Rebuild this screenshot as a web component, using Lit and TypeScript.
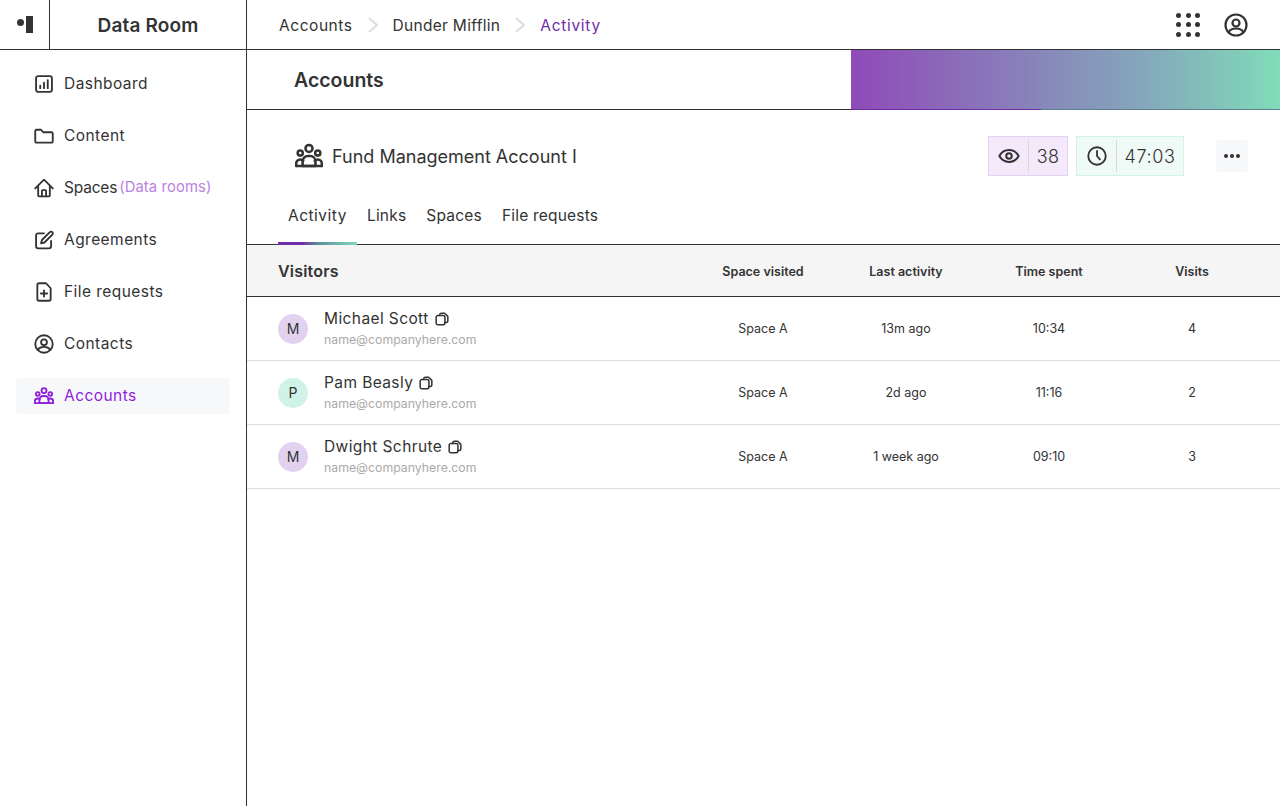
import { LitElement, html, css, svg } from 'lit';
import { customElement } from 'lit/decorators.js';
import { classMap } from 'lit/directives/class-map.js';

const icon = (body: unknown, size = 24, weight = 2.2) => html`<svg width=${size} height=${size} viewBox="0 0 24 24" fill="none" stroke="currentColor" stroke-width=${weight} stroke-linecap="round" stroke-linejoin="round">${body}</svg>`;

const chart = svg`<rect x="2.500" y="2.500" width="19" height="19" rx="2.500"/><path d="M7.500 17v-3M12 17V10.500M16.500 17V7.500"/>`;
const folder = svg`<path d="M1.500 6a1.500 1.500 0 0 1 1.500-1.500h5.500l2.500 3h10A1.500 1.500 0 0 1 22.500 9v9.500a1.500 1.500 0 0 1-1.500 1.500H3a1.500 1.500 0 0 1-1.500-1.500z"/>`;
const home = svg`<path d="M1.500 12.500 12 2 22.500 12.500M5 9.500V21a1 1 0 0 0 1 1h12a1 1 0 0 0 1-1V9.500"/><path d="M9.500 22v-6.500a1 1 0 0 1 1-1h3a1 1 0 0 1 1 1V22"/>`;
const edit = svg`<path d="M12 4H5a2.500 2.500 0 0 0-2.500 2.500v13A2.500 2.500 0 0 0 5 22h13a2.500 2.500 0 0 0 2.500-2.500V13"/><path d="M19 2.500a2.100 2.100 0 0 1 3 3L12.500 15 8.500 16l1-4z"/>`;
const filePlus = svg`<path d="M14.500 1.500H6a2 2 0 0 0-2 2v17a2 2 0 0 0 2 2h12a2 2 0 0 0 2-2V7.500z"/><path d="M12 10v7.500M8.250 13.750h7.500"/>`;
const user = svg`<circle cx="12" cy="12" r="10.500"/><circle cx="12" cy="10" r="3.500"/><path d="M4.500 19c1.500-2.200 4-3.500 7.500-3.500s6 1.300 7.500 3.500"/>`;
const group = svg`<circle cx="12" cy="5.500" r="3"/><circle cx="4.500" cy="9.500" r="2.200"/><circle cx="19.500" cy="9.500" r="2.200"/><path d="M1 20.500v-2a3.500 3.500 0 0 1 3.500-3.500c1 0 1.800.3 2.500 1M23 20.500v-2a3.500 3.500 0 0 0-3.500-3.500c-1 0-1.800.3-2.500 1"/><path d="M6.500 20.500v-4a4.500 4.500 0 0 1 4.500-4.500h2a4.500 4.500 0 0 1 4.500 4.500v4z"/><path d="M1 20.500h22"/>`;
const eye = svg`<path d="M1.500 12C4 7.500 7.500 5.500 12 5.500s8 2 10.500 6.500c-2.500 4.500-6 6.500-10.500 6.500S4 16.500 1.500 12z"/><circle cx="12" cy="12" r="3"/>`;
const clock = svg`<circle cx="12" cy="12" r="10.500"/><path d="M12 6v6l3.500 4"/>`;
const copy = svg`<path d="M8 6V5a3 3 0 0 1 3-3h5.500L22 7.500V15a3 3 0 0 1-3 3h-2"/><rect x="2" y="6" width="15" height="16" rx="3"/>`;

const nav = [
  { label: 'Dashboard', icon: chart },
  { label: 'Content', icon: folder },
  { label: 'Spaces', note: '(Data rooms)', icon: home },
  { label: 'Agreements', icon: edit },
  { label: 'File requests', icon: filePlus },
  { label: 'Contacts', icon: user },
  { label: 'Accounts', icon: group, active: true },
];

const visitors = [
  { name: 'Michael Scott', initial: 'M', tone: 'purple', last: '13m ago', time: '10:34', visits: 4 },
  { name: 'Pam Beasly', initial: 'P', tone: 'green', last: '2d ago', time: '11:16', visits: 2 },
  { name: 'Dwight Schrute', initial: 'M', tone: 'purple', last: '1 week ago', time: '09:10', visits: 3 },
];

const crumbSep = html`<svg class="sep" width="10" height="16" viewBox="0 0 10 16" fill="none" stroke="currentColor" stroke-width="2"><path d="M1 1l8 7-8 7"/></svg>`;

@customElement('app-root')
export class AppRoot extends LitElement {
  static styles = css`
    :host {
      display: flex;
      height: 806px;
      background: #fff;
      color: #333;
      font-family: Inter, "Noto Sans", sans-serif;
      font-size: 15.500px;
      letter-spacing: .3px;
      overflow: hidden;
    }
    svg { display: block; flex: none; }
    .side {
      width: 246px;
      flex: none;
      border-right: 1px solid #333;
    }
    .brand {
      display: flex;
      height: 49px;
      border-bottom: 1px solid #333;
    }
    .logo {
      width: 49px;
      flex: none;
      border-right: 1px solid #333;
      display: flex;
      align-items: center;
      justify-content: center;
      gap: 2px;
    }
    .logo i { display: block; background: #333; }
    .logo .dot { width: 7px; height: 7px; border-radius: 50%; margin-top: -5px; }
    .logo .bar { width: 7px; height: 17px; }
    .brand-name {
      flex: 1;
      display: flex;
      align-items: center;
      justify-content: center;
      font-size: 19px;
      font-weight: 600;
      letter-spacing: .15px;
      padding-top: 1px;
    }
    .nav {
      display: flex;
      flex-direction: column;
      gap: 16px;
      padding: 16px;
    }
    .nav-item {
      height: 36px;
      width: 214px;
      display: flex;
      align-items: center;
      gap: 10px;
      padding-left: 18px;
      box-sizing: border-box;
      border-radius: 3px;
      letter-spacing: .45px;
    }
    .nav-item span { margin-top: -2px; }
    .nav-item.noted { letter-spacing: -.2px; }
    .nav-item.active { background: #f7f8fa; color: #8f1fdc; }
    .nav-item .note { color: #bb7fe2; font-size: 14.800px; letter-spacing: .1px; margin-left: -8px; }
    .main { flex: 1; min-width: 0; }
    .top {
      height: 49px;
      display: flex;
      align-items: center;
      padding: 0 32px;
      border-bottom: 1px solid #333;
    }
    .crumbs { display: flex; align-items: center; flex: 1; padding-top: 1px; }
    .crumbs .sep { color: #dcdcdc; margin: -1px 15px 0; }
    .crumbs .first { letter-spacing: .55px; }
    .crumbs .current { color: #6f2da8; letter-spacing: .7px; }
    .top-actions { display: flex; align-items: center; gap: 24px; }
    .apps {
      display: grid;
      grid-template-columns: repeat(3, 5px);
      gap: 4.500px;
    }
    .apps i { width: 5px; height: 5px; border-radius: 50%; background: #333; }
    .page-head {
      height: 59px;
      display: flex;
      align-items: center;
      justify-content: space-between;
      position: relative;
      border-bottom: 1px solid #333;
    }
    .page-head h1 { margin: 1px 0 0 47px; font-size: 19.500px; font-weight: 600; letter-spacing: 0; }
    .band {
      width: 429px;
      height: 100%;
      background: linear-gradient(90deg, #8f4ab8, #84aabb 70%, #80dcb9);
    }
    .page-head::after {
      content: '';
      position: absolute;
      right: 0;
      bottom: -1px;
      width: 429px;
      height: 1px;
      background: linear-gradient(90deg, #6f2da8 190px, #5d7f8f 190px);
    }
    .account {
      height: 92px;
      display: flex;
      align-items: center;
      padding: 0 32px 0 48px;
      box-sizing: border-box;
    }
    .account-name { display: flex; align-items: center; gap: 9px; flex: 1; font-size: 18px; letter-spacing: 0; }
    .stat {
      height: 40px;
      box-sizing: border-box;
      display: flex;
      align-items: center;
      border: 1px solid;
      margin-right: 8px;
      font-size: 18px;
      font-weight: 300;
    }
    .stat .ico { display: flex; align-items: center; justify-content: center; height: 32px; width: 39px; border-right: 1px solid #d8d8d8; }
    .stat .val { flex: 1; text-align: center; }
    .stat.views { width: 80px; background: #f3e9fa; border-color: #e6d3f3; }
    .stat.time { width: 108px; background: #eff9f6; border-color: #d3f2e8; letter-spacing: .6px; }
    .more {
      width: 32px;
      height: 32px;
      margin-left: 24px;
      border-radius: 4px;
      background: #f7f8fa;
      display: flex;
      align-items: center;
      justify-content: center;
      gap: 2px;
    }
    .more i { width: 4px; height: 4px; border-radius: 50%; background: #333; }
    .tabs {
      height: 42px;
      display: flex;
      padding-left: 31px;
      border-bottom: 1px solid #333;
      letter-spacing: .2px;
    }
    .tab { padding: 0 10px 16px; display: flex; align-items: center; position: relative; }
    .tab.active { letter-spacing: .5px; }
    .tab.active::after {
      content: '';
      position: absolute;
      left: 0;
      right: 0;
      bottom: -1px;
      height: 3px;
      background: linear-gradient(90deg, #6f2da8 30%, #5d8c9c 50%, #80dcb9);
    }
    .row {
      display: grid;
      grid-template-columns: 1fr repeat(4, 143px);
      align-items: center;
      padding: 0 16.500px 0 31px;
      text-align: center;
      font-size: 12.500px;
      letter-spacing: 0;
    }
    .row.head {
      height: 51px;
      background: #f5f5f5;
      border-bottom: 1px solid #333;
      font-weight: 600;
    }
    .row.head span + span { padding-top: 2px; }
    .row.head :first-child { text-align: left; font-size: 16px; letter-spacing: .2px; }
    .row.body {
      height: 63px;
      border-bottom: 1px solid #ddd;
    }
    .who { display: flex; align-items: center; gap: 16px; text-align: left; }
    .avatar {
      width: 30px;
      height: 30px;
      border-radius: 50%;
      display: flex;
      align-items: center;
      justify-content: center;
      font-size: 14px;
    }
    .avatar.purple { background: #e3d2ef; }
    .avatar.green { background: #d1f2e7; }
    .name { display: flex; align-items: center; gap: 6px; font-size: 15.500px; letter-spacing: .4px; line-height: 20px; }
    .email { font-size: 12.300px; color: #aaa; line-height: 16px; margin-top: 3px; }
  `;

  render() {
    return html`
      <aside class="side">
        <div class="brand">
          <div class="logo"><i class="dot"></i><i class="bar"></i></div>
          <div class="brand-name">Data Room</div>
        </div>
        <nav class="nav">
          ${nav.map(n => html`
            <div class=${classMap({ 'nav-item': true, active: !!n.active, noted: !!n.note })}>
              ${icon(n.icon, 20)}
              <span>${n.label}</span>
              ${n.note ? html`<span class="note">${n.note}</span>` : ''}
            </div>`)}
        </nav>
      </aside>
      <main class="main">
        <header class="top">
          <div class="crumbs">
            <span class="first">Accounts</span>${crumbSep}
            <span>Dunder Mifflin</span>${crumbSep}
            <span class="current">Activity</span>
          </div>
          <div class="top-actions">
            <div class="apps">${Array.from({ length: 9 }, () => html`<i></i>`)}</div>
            ${icon(user, 24)}
          </div>
        </header>
        <div class="page-head">
          <h1>Accounts</h1>
          <div class="band"></div>
        </div>
        <section class="account">
          <div class="account-name">${icon(group, 28)}<span>Fund Management Account I</span></div>
          <div class="stat views"><span class="ico">${icon(eye, 22)}</span><span class="val">38</span></div>
          <div class="stat time"><span class="ico">${icon(clock, 20)}</span><span class="val">47:03</span></div>
          <div class="more"><i></i><i></i><i></i></div>
        </section>
        <div class="tabs">
          <div class="tab active">Activity</div>
          <div class="tab">Links</div>
          <div class="tab">Spaces</div>
          <div class="tab">File requests</div>
        </div>
        <div class="row head">
          <span>Visitors</span><span>Space visited</span><span>Last activity</span><span>Time spent</span><span>Visits</span>
        </div>
        ${visitors.map(v => html`
          <div class="row body">
            <div class="who">
              <div class="avatar ${v.tone}">${v.initial}</div>
              <div>
                <div class="name">${v.name} ${icon(copy, 14, 2.6)}</div>
                <div class="email">name@companyhere.com</div>
              </div>
            </div>
            <span>Space A</span><span>${v.last}</span><span>${v.time}</span><span>${v.visits}</span>
          </div>`)}
      </main>
    `;
  }
}
